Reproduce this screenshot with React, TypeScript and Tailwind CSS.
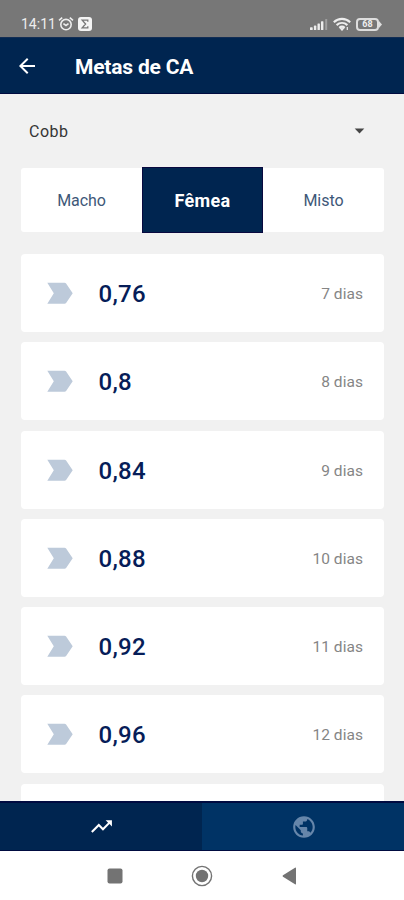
import { MdArrowBack, MdArrowDropDown, MdPublic, MdTrendingUp } from "react-icons/md";

const goals = [
  { value: "0,76", day: 7 },
  { value: "0,8", day: 8 },
  { value: "0,84", day: 9 },
  { value: "0,88", day: 10 },
  { value: "0,92", day: 11 },
  { value: "0,96", day: 12 },
];

function AlarmIcon() {
  return (
    <svg className="ml-[2px] h-4 w-4" viewBox="0 0 16 16" fill="none" stroke="currentColor" strokeWidth="1.6">
      <circle cx="8" cy="8.6" r="5.2" />
      <path d="M1 4.4 4.2 1.7M15 4.4 11.8 1.7M5.4 7.6 8 9.4l2.5-1.8" />
    </svg>
  );
}

function SigmaBadge() {
  return (
    <svg className="ml-[4px] h-[14px] w-[14px]" viewBox="0 0 14 14">
      <rect width="14" height="14" rx="3" fill="#f4f4f4" />
      <path d="M9.8 4.8V3.2H4.2L7.6 7l-3.4 3.8h5.6V9.2" fill="none" stroke="#777" strokeWidth="1.3" />
    </svg>
  );
}

function StatusBar() {
  return (
    <div className="flex h-[37px] shrink-0 items-start bg-[#777777] pt-4 pl-[21px] pr-[22px] text-[#ededed]">
      <span className="mt-px text-[14px] leading-[15px]">14:11</span>
      <AlarmIcon />
      <div className="mt-px"><SigmaBadge /></div>
      <div className="ml-auto flex h-4 items-center">
        <svg className="h-[13px] w-[18px]" viewBox="0 0 18 13" fill="currentColor">
          <rect x="0" y="9.3" width="2.7" height="2.7" rx=".6" />
          <rect x="3.9" y="7.6" width="2.4" height="4.4" rx=".6" />
          <rect x="7.5" y="5.5" width="2.4" height="6.5" rx=".6" />
          <rect x="11" y="3.2" width="2.4" height="8.8" rx=".6" />
          <rect x="15.2" y="1" width="2" height="11" rx=".6" opacity=".35" />
        </svg>
        <svg className="ml-[5px] h-[14px] w-[18px]" viewBox="0 0 18 14" fill="none" stroke="currentColor" strokeWidth="2.1">
          <path d="M.8 5.2c4.7-4.5 11.7-4.5 16.4 0M3.6 8.1c3.2-2.9 7.6-2.9 10.8 0M6.3 10.7c1.7-1.4 3.7-1.4 5.4 0" />
          <path d="m7.3 11.2 1.7 2 1.7-2zM14.3 10v3" strokeWidth="1.2" />
        </svg>
        <div className="ml-[5px] flex items-center">
          <div className="flex h-[13px] w-[23px] items-center justify-center rounded-[4px] border-2 border-[#dedede] text-[9px] leading-none font-bold">68</div>
          <svg className="h-[7px] w-[3px]" viewBox="0 0 3 7" fill="#dedede"><path d="M0 0 3 3.5 0 7z" /></svg>
        </div>
      </div>
    </div>
  );
}

function GoalCard({ value, day }: { value: string; day: number }) {
  return (
    <div className="flex h-[78px] shrink-0 items-center rounded-[4px] bg-white pr-[21px] pl-[26px]">
      <svg className="h-[22px] w-[26px]" viewBox="0 0 26 22" fill="#bdcada">
        <path d="M.3.8h17.2q1 0 1.6.8l6.6 9.7-6.6 9.6q-.6.8-1.6.8H.3l6.5-10.4z" />
      </svg>
      <span className="mt-[2px] ml-[25.5px] text-[24px] leading-7 font-medium tracking-[0.25px] text-[#061d58]">{value}</span>
      <span className="mt-[2px] ml-auto text-[15.5px] leading-5 tracking-[0.05px] text-[#858585]">{day} dias</span>
    </div>
  );
}

export default function App() {
  return (
    <div className="flex h-[900px] w-[404px] flex-col overflow-hidden bg-[#f1f1f1] font-['Roboto',sans-serif]">
      <StatusBar />
      <header className="flex h-[57px] shrink-0 items-center border-t border-b border-t-[#122d54] border-b-[#000b40] bg-[#002550] pl-[15px] text-white">
        <MdArrowBack className="h-6 w-6" />
        <h1 className="mt-[2px] ml-[36px] text-[21px] leading-6 font-bold tracking-[-0.2px]">Metas de CA</h1>
      </header>
      <main className="flex min-h-0 flex-1 flex-col overflow-hidden pr-5 pl-[21px]">
        <div className="flex h-[73px] shrink-0 items-center justify-between pr-[13px] pl-2">
          <span className="mt-[3px] text-[16px] leading-5 tracking-[0.5px] text-[#353535]">Cobb</span>
          <MdArrowDropDown className="h-[23px] w-[23px] text-[#454545]" />
        </div>
        <div className="flex h-[66px] shrink-0 items-center text-[16px] tracking-[-0.05px] text-[#3e5878]">
          <div className="flex h-16 flex-1 items-center justify-center rounded-l-[3px] bg-white pt-[2px]">Macho</div>
          <div className="flex h-[66px] w-[121px] items-center justify-center border border-[#09093f] bg-[#002550] pt-px text-[18px] font-bold tracking-[0.3px] text-white">Fêmea</div>
          <div className="flex h-16 flex-1 items-center justify-center rounded-r-[3px] bg-white pt-[2px]">Misto</div>
        </div>
        <div className="mt-[21px] flex flex-col gap-[10.3px]">
          {goals.map((goal) => <GoalCard key={goal.day} {...goal} />)}
          <div className="h-[78px] shrink-0 rounded-[4px] bg-white" />
        </div>
      </main>
      <nav className="grid h-[50px] shrink-0 grid-cols-2 border-t-2 border-b border-[#000b40]">
        <div className="flex items-center justify-center bg-[#002550] pl-px text-white"><MdTrendingUp className="h-[25px] w-[25px]" /></div>
        <div className="flex items-center justify-center bg-[#003365] pl-[2px] text-[#6686aa]"><MdPublic className="h-[26px] w-[26px]" /></div>
      </nav>
      <div className="flex h-[49px] shrink-0 items-center bg-white pl-[107px] text-[#737373]">
        <svg className="h-4 w-4" viewBox="0 0 16 16"><rect x=".5" y=".5" width="15" height="15" rx="2" fill="currentColor" /></svg>
        <svg className="ml-[68px] h-[22px] w-[22px]" viewBox="0 0 22 22">
          <circle cx="11" cy="11" r="9.6" fill="none" stroke="currentColor" strokeWidth="1.4" />
          <circle cx="11" cy="11" r="6.2" fill="currentColor" />
        </svg>
        <svg className="ml-[69px] h-[18px] w-[15px]" viewBox="0 0 15 18" fill="currentColor"><path d="M13 .7q1-.5 1 .5v15.6q0 1-1 .5L1 9.7Q0 9 1 8.3z" /></svg>
      </div>
    </div>
  );
}
